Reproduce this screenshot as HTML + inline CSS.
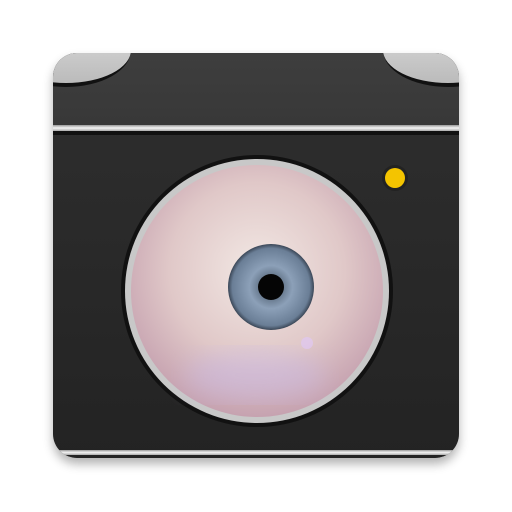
<!DOCTYPE html><html><head><style>
html,body{margin:0;width:512px;height:512px;background:#fff;overflow:hidden}
.ic{position:absolute;left:53px;top:53px;width:406px;height:405px;border-radius:24px;overflow:hidden;
background:linear-gradient(#2f2f2f,#232323);box-shadow:0 6px 10px rgba(0,0,0,.3)}
.top{position:absolute;left:0;top:0;width:100%;height:72px;background:linear-gradient(#3e3e3e,#383838)}
.line{position:absolute;left:0;width:100%;height:6px;background:linear-gradient(#999,#f4f4f4,#aaa)}
.bump{position:absolute;top:-40px;width:130px;height:70px;border-radius:50%;background:linear-gradient(#e0e0e0,#bbb);border-bottom:4px solid #111}
</style></head><body>
<div class="ic">
<div class="top"></div>
<div class="bump" style="left:-52px"></div>
<div class="bump" style="left:330px"></div>
<div class="line" style="top:72px"></div>
<div style="position:absolute;top:78px;left:0;width:100%;height:4px;background:#111"></div>
<div class="line" style="top:397px;height:5px"></div>
</div>
<svg width="512" height="512" style="position:absolute;left:0;top:0">
<defs>
<radialGradient id="s" cx="50%" cy="42%" r="58%"><stop offset="0" stop-color="#f2e8e4"/><stop offset=".6" stop-color="#e0c8c8"/><stop offset="1" stop-color="#c6a2b0"/></radialGradient>
<radialGradient id="ir" cx="50%" cy="50%" r="50%"><stop offset="0" stop-color="#3b4a5a"/><stop offset=".5" stop-color="#8ca0b8"/><stop offset=".9" stop-color="#6a7e96"/><stop offset="1" stop-color="#3a4656"/></radialGradient>
<filter id="b"><feGaussianBlur stdDeviation="12"/></filter>
</defs>
<circle cx="257" cy="291" r="136" fill="#111"/>
<circle cx="257" cy="291" r="132" fill="#c8c8c8"/>
<circle cx="257" cy="291" r="126" fill="url(#s)"/>
<ellipse cx="255" cy="375" rx="70" ry="25" fill="#c8b8e8" opacity=".45" filter="url(#b)"/>
<circle cx="271" cy="287" r="43" fill="url(#ir)"/>
<circle cx="271" cy="287" r="13" fill="#050505"/>
<circle cx="307" cy="343" r="6" fill="#e0c8f4" opacity=".7"/>
<circle cx="395" cy="178" r="13" fill="#222"/>
<circle cx="395" cy="178" r="10" fill="#f4c400"/>
</svg>
</body></html>
